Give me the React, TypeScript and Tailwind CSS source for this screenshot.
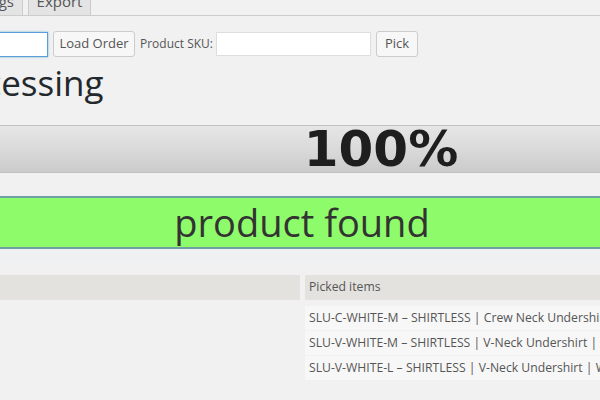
import React from "react";

export default function App() {
  const font = { fontFamily: '"Open Sans", "Liberation Sans", sans-serif' };
  return (
    <div
      className="w-[600px] h-[400px] overflow-hidden bg-[#f1f1f1] text-[#444]"
      style={font}
    >
      {/* tabs */}
      <div className="flex h-[16px] items-end border-b border-[#cccccc]">
        <div className="-ml-[57px] w-[80px] h-[24px] -mb-px flex items-end justify-end pr-[8px] pb-[6px] bg-[#e4e4e4] border border-[#cccccc] text-[15px] leading-none text-[#555]">
          Settings
        </div>
        <div className="ml-[5px] w-[63px] h-[24px] -mb-px flex items-end justify-center pb-[6px] bg-[#e4e4e4] border border-[#cccccc] text-[15px] leading-none text-[#555]">
          Export
        </div>
      </div>

      {/* form row */}
      <div className="mt-[15px] flex items-center h-[26px]">
        <div className="-ml-[12px] w-[60px] h-[25px] bg-white border border-[#5b9dd9] shadow-[0_0_2px_rgba(30,140,190,0.6)]" />
        <div className="ml-[5px] w-[82px] h-[26px] flex items-center justify-center bg-[#f7f7f7] border border-[#cccccc] rounded-[3px] text-[13px] text-[#555]">
          Load Order
        </div>
        <div className="ml-[5px] w-[72px] text-[12px] text-[#555] whitespace-nowrap">Product SKU:</div>
        <div className="ml-[4px] w-[155px] h-[24px] bg-white border border-[#dddddd]" />
        <div className="ml-[5px] w-[42px] h-[26px] flex items-center justify-center bg-[#f7f7f7] border border-[#cccccc] rounded-[3px] text-[13px] text-[#555]">
          Pick
        </div>
      </div>

      {/* heading */}
      <div className="-ml-[72px] mt-[2px] h-[48px] text-[35px] leading-[48px] text-[#23282d] whitespace-nowrap">
        Processing
      </div>

      {/* progress */}
      <div className="mt-[18px] h-[48px] border-y border-[#c2c2c2] bg-gradient-to-b from-[#e6e6e6] via-[#dadada] to-[#cbcbcb] flex items-center justify-center pl-[162px]">
        <span
          className="text-[50px] font-bold leading-none text-[#1e1e1e]"
          style={{ fontFamily: '"DejaVu Sans", Verdana, sans-serif' }}
        >
          100%
        </span>
      </div>

      {/* status */}
      <div className="mt-[23px] h-[53px] border-y-2 border-[#6fa0a6] bg-[#8efb6a] flex items-center justify-center pl-[4px]">
        <span className="text-[38px] leading-none text-[#333] pb-[2px]">
          product found
        </span>
      </div>
      <div className="h-[12px] bg-[#eef0f2]" />

      {/* table */}
      <div className="mt-[14px] grid grid-cols-[300px_295px] gap-x-[5px] gap-y-[1px] text-[12.2px] text-[#555]">
        <div className="h-[25px] bg-[#e4e2df]" />
        <div className="h-[25px] bg-[#e4e2df] flex items-center pl-[4px]">Picked items</div>
        <div className="h-[24px] mt-[5px]" />
        <div className="h-[24px] mt-[5px] bg-[#f7f7f7] flex items-center pl-[4px] whitespace-nowrap overflow-hidden">
          SLU-C-WHITE-M – SHIRTLESS | Crew Neck Undershirt | White | M
        </div>
        <div className="h-[24px]" />
        <div className="h-[24px] bg-[#f7f7f7] flex items-center pl-[4px] whitespace-nowrap overflow-hidden">
          SLU-V-WHITE-M – SHIRTLESS | V-Neck Undershirt | White | M
        </div>
        <div className="h-[24px]" />
        <div className="h-[24px] bg-[#f7f7f7] flex items-center pl-[4px] whitespace-nowrap overflow-hidden">
          SLU-V-WHITE-L – SHIRTLESS | V-Neck Undershirt | White | L
        </div>
      </div>
    </div>
  );
}
